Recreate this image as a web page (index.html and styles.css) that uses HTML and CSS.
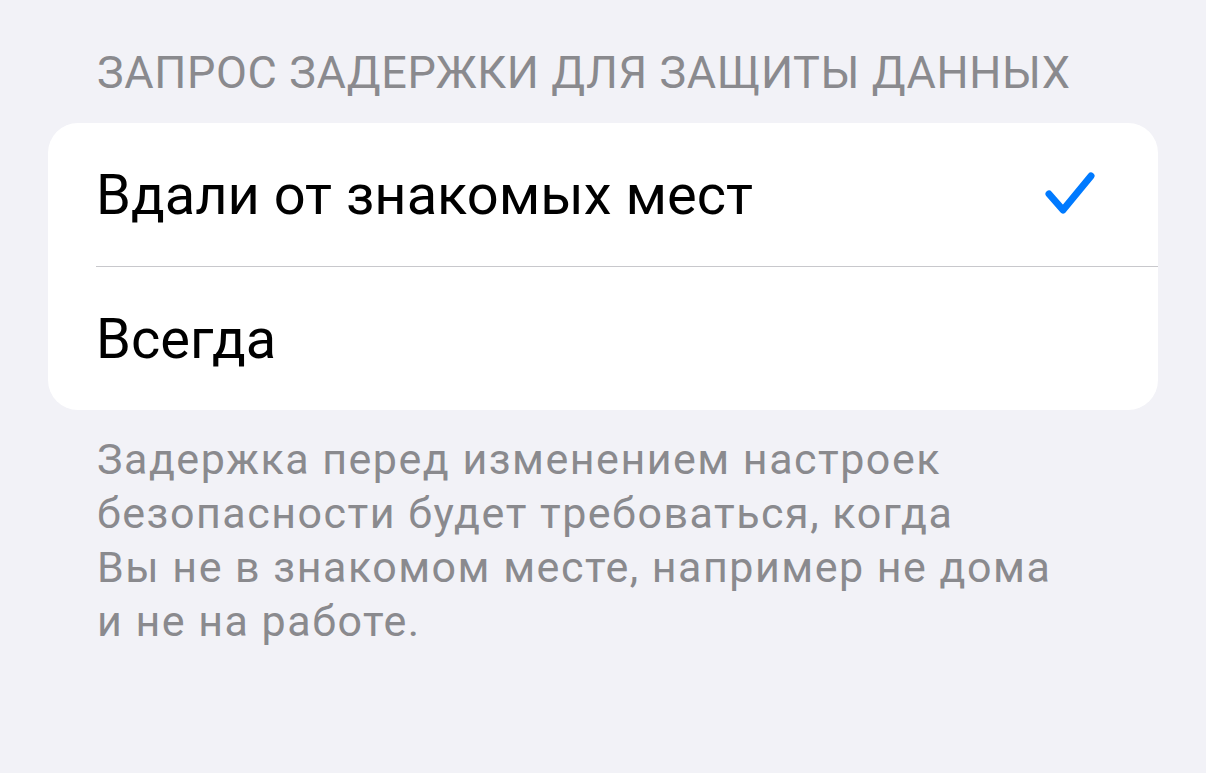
FILE: index.html
```html
<!DOCTYPE html>
<html>
  <head>
    <title>Защита украденного устройства</title>
    <link rel="stylesheet" href="styles.css">
  </head>

  <body>
    <div class="section">
      <div class="section-header">Запрос задержки для защиты данных</div>

      <div class="group">
        <div class="cell">
          <span class="cell-title">Вдали от знакомых мест</span>
          <svg class="check" width="54" height="50" viewBox="0 0 54 50">
            <path d="M5 24 L19 40 L47 6" fill="none" stroke="#007aff" stroke-width="7" stroke-linecap="round" stroke-linejoin="round" />
          </svg>
        </div>
        <div class="cell">
          <span class="cell-title">Всегда</span>
        </div>
      </div>

      <div class="section-footer">
        Задержка перед изменением настроек<br>
        безопасности будет требоваться, когда<br>
        Вы не в знакомом месте, например не дома<br>
        и не на работе.
      </div>
    </div>
  </body>
</html>
```

FILE: styles.css
```css
html,
body {
  margin: 0;
  height: 100%;
}

body {
  background: #f2f2f7;
  font-family: Roboto, "Noto Sans", sans-serif;
  overflow: hidden;
}

.section {
  padding: 46px 48px 0 48px;
}

.section-header {
  padding: 0 49px;
  color: #8a8a8e;
  font-size: 45px;
  line-height: 54px;
  letter-spacing: 0.6px;
  text-transform: uppercase;
  margin-bottom: 23px;
}

.group {
  background: #fff;
  border-radius: 30px;
  overflow: hidden;
}

.cell {
  display: flex;
  align-items: center;
  justify-content: space-between;
  height: 143px;
  margin-left: 48px;
  padding-right: 60px;
}

.cell + .cell {
  border-top: 1.5px solid #c8c8cc;
}

.cell-title {
  font-size: 56px;
  color: #000;
}

.check {
  display: block;
}

.section-footer {
  padding: 22px 49px 0 49px;
  color: #8a8a8e;
  font-size: 43px;
  line-height: 54px;
  letter-spacing: 1.5px;
}
```
